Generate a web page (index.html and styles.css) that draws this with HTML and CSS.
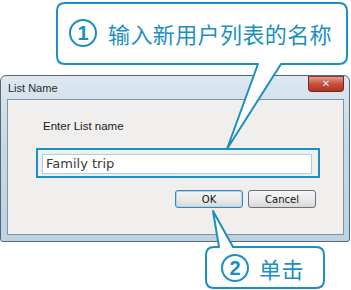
FILE: index.html
```html
<!DOCTYPE html>
<html lang="zh">
<head>
    <meta charset="UTF-8">
    <title>List Name</title>
    <link rel="stylesheet" href="styles.css">
</head>
<body>
    <div class="page">
        <!-- dialog -->
        <div class="window">
            <div class="titlebar">
                <span class="title">List Name</span>
                <span class="close">&#x2715;</span>
            </div>
            <div class="client">
                <p class="label">Enter List name</p>
                <div class="highlight">
                    <div class="textbox">Family trip</div>
                </div>
                <div class="buttons">
                    <button class="btn default">OK</button>
                    <button class="btn">Cancel</button>
                </div>
            </div>
        </div>

        <!-- callout shapes -->
        <svg class="shapes" width="351" height="290" viewBox="0 0 351 290">
            <path d="M65 3 H339 Q347 3 347 11 V56 Q347 64 339 64 H281 L227 149 L258 64 H65 Q57 64 57 56 V11 Q57 3 65 3 Z"
                  fill="#fff" stroke="#1b8fc1" stroke-width="2" stroke-linejoin="round"/>
            <path d="M214 247 H219 L213 211 L233 247 H316 Q324 247 324 255 V280 Q324 288 316 288 H214 Q206 288 206 280 V255 Q206 247 214 247 Z"
                  fill="#fff" stroke="#1b8fc1" stroke-width="2" stroke-linejoin="round"/>
        </svg>

        <div class="callout one">
            <span class="num">1</span>
            <span class="say">输入新用户列表的名称</span>
        </div>
        <div class="callout two">
            <span class="num">2</span>
            <span class="say">单击</span>
        </div>
    </div>
</body>
</html>
```

FILE: styles.css
```css
* {
    margin: 0;
    padding: 0;
    box-sizing: border-box;
}

body {
    background: #fff;
    font-family: "Liberation Sans", Arial, sans-serif;
}

.page {
    position: relative;
    width: 351px;
    height: 290px;
    overflow: hidden;
    padding-top: 75px;
}

/* Dialog window */
.window {
    width: 350px;
    height: 167px;
    border: 1px solid #55687a;
    border-radius: 6px 6px 3px 3px;
    background: linear-gradient(#dde8f0, #c6d9e6 40%, #bdd3e1);
    display: flex;
    flex-direction: column;
}

.titlebar {
    height: 23px;
    display: flex;
    justify-content: space-between;
    align-items: flex-start;
    padding-left: 7px;
}

.title {
    font-size: 11px;
    color: #2a2a2a;
    margin-top: 6px;
}

.close {
    width: 36px;
    height: 16px;
    margin-right: 5px;
    border: 1px solid #6d2a22;
    border-top-color: #8a3a30;
    border-radius: 0 0 4px 4px;
    background: linear-gradient(#e59a8e, #c8503d 50%, #b2321f);
    color: #fff;
    font-family: "DejaVu Sans", sans-serif;
    font-size: 10px;
    font-weight: bold;
    text-align: center;
    line-height: 14px;
    text-shadow: 0 0 1px #5a1a10;
}

.client {
    margin: 0 5px 0 6px;
    height: 136px;
    border: 1px solid #8493a0;
    background: #f0efed;
    padding: 19px 0 0 28px;
}

.label {
    font-size: 11.5px;
    line-height: 14px;
    color: #1a1a1a;
    padding-left: 7px;
}

.highlight {
    margin-top: 15px;
    width: 284px;
    height: 30px;
    border: 2px solid #1b8fc1;
    padding: 4px 6px 2px 4px;
}

.textbox {
    height: 20px;
    border: 1px solid #a9cfe3;
    background: #fff;
    font-family: "DejaVu Sans", sans-serif;
    font-size: 13px;
    line-height: 18px;
    padding-left: 3px;
    color: #3a3a3a;
}

.buttons {
    display: flex;
    justify-content: flex-end;
    gap: 5px;
    margin-top: 12px;
    padding-right: 27px;
}

.btn {
    width: 68px;
    height: 18px;
    border: 1px solid #707070;
    border-radius: 3px;
    background: linear-gradient(#f4f4f4, #ebebeb 50%, #d9d9d9);
    font-family: "DejaVu Sans", sans-serif;
    font-size: 10px;
    color: #111;
}

.btn.default {
    border-color: #3a86b8;
    box-shadow: inset 0 0 0 1px #a9d6ef;
}

/* Callouts */
.shapes {
    position: absolute;
    left: 0;
    top: 0;
}

.callout {
    position: absolute;
    display: flex;
    align-items: center;
    color: #1b8fc1;
    font-family: "Noto Sans CJK SC", "Noto Sans", sans-serif;
}

.callout.one {
    left: 69px;
    top: 19px;
    gap: 11px;
}

.callout.two {
    left: 221px;
    top: 254px;
    gap: 10px;
}

.num {
    width: 28px;
    height: 28px;
    border: 2px solid #1b8fc1;
    border-radius: 50%;
    background: #fff;
    font-family: "Liberation Sans", Arial, sans-serif;
    font-weight: bold;
    font-size: 20px;
    line-height: 24px;
    text-align: center;
}

.say {
    font-size: 22px;
    line-height: 28px;
    letter-spacing: 0.4px;
}
```
